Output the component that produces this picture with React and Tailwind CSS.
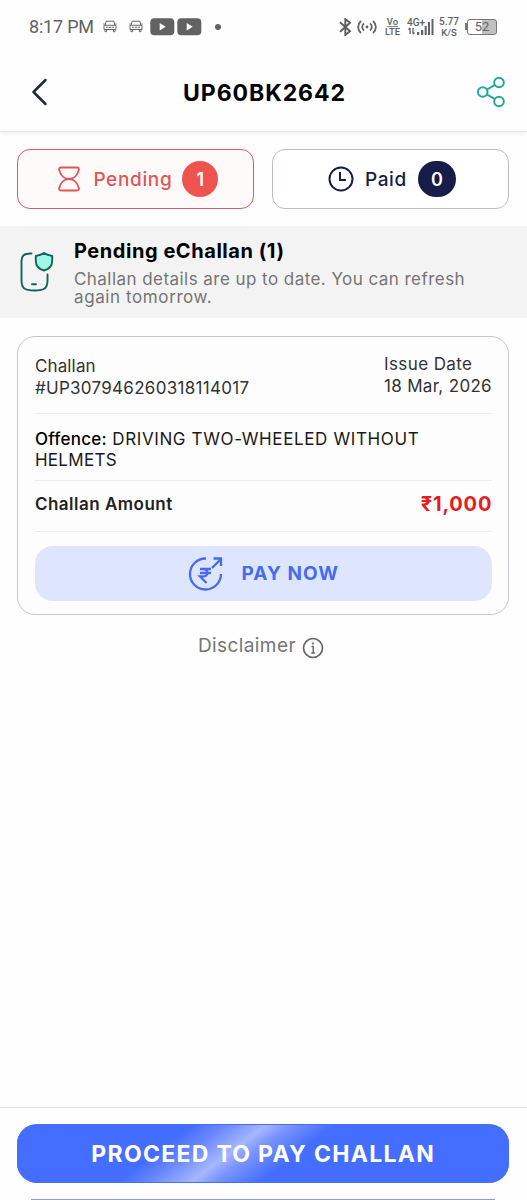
const tabClass = 'flex h-[60px] w-[237px] items-center rounded-[13px]'

function StatusCar() {
  return (
    <svg width="14" height="13" viewBox="0 0 14 13" fill="none" stroke="#666" strokeWidth="1">
      <path d="M2.2 5 3.2 1.2h7.6L11.8 5M1 5.3h12v4.2H1zM.3 4h1.5M12.2 4h1.5M3 7.3h1.8M9.2 7.3H11M5.6 7.4h2.8M2 9.5v2.2h1.6V9.5M10.4 9.5v2.2H12V9.5" />
    </svg>
  )
}

function StatusPlay() {
  return (
    <svg width="25" height="18" viewBox="0 0 25 18">
      <rect x=".3" y=".3" width="24" height="17" rx="4" fill="#626262" />
      <path d="m9.700 5 6 3.800-6 3.800Z" fill="#fff" />
    </svg>
  )
}

function StatusBar() {
  return (
    <div className="flex h-[53px] items-center pl-[29px] pr-[30px] text-[#626262]">
      <span className="w-[65px] whitespace-nowrap font-['Roboto'] text-[18px] tracking-[-0.2px]">8:17 PM</span>
      <div className="ml-[9px] flex items-center">
        <StatusCar />
        <span className="ml-[12px]"><StatusCar /></span>
        <span className="ml-[7px]"><StatusPlay /></span>
        <span className="ml-[1.5px]"><StatusPlay /></span>
        <span className="ml-[13px] h-[6px] w-[6px] rounded-full bg-[#626262]" />
      </div>
      <div className="ml-auto flex items-center font-['Roboto']">
        <svg width="13" height="18" viewBox="0 0 13 18" fill="none" stroke="#5c5c5c" strokeWidth="1.9">
          <path d="m1 4.200 10 9L6.300 17V1L11 4.800l-10 9" />
        </svg>
        <svg className="ml-[5px]" width="20" height="14" viewBox="0 0 20 14" fill="none" stroke="#626262" strokeWidth="1.8">
          <path d="M4 1C.2 4.400.2 9.600 4 13M7 3.400c-2.400 2-2.400 5.200 0 7.200M16 1c3.800 3.400 3.800 8.600 0 12M13 3.400c2.400 2 2.400 5.200 0 7.200" />
          <circle cx="10" cy="7" r="1.4" fill="#626262" stroke="none" />
        </svg>
        <div className="ml-[7px] flex w-[17px] flex-col items-center text-[9.5px] font-medium leading-[9px]">
          <span className="border-b border-[#888]">Vo</span>
          <span>LTE</span>
        </div>
        <svg className="ml-[6px]" width="28" height="18" viewBox="0 0 28 18" fill="#626262">
          <text x="0" y="8" fontSize="10" fontWeight="500" fontFamily="Roboto">4G+</text>
          <path d="M3 10v6M1.500 11.500 3 10M6 10v6M7.500 14.500 6 16" stroke="#626262" strokeWidth="1.3" fill="none" />
          <path d="M10 14h2.200v3H10zM14 12h2.200v5H14zM17.700 8h2v9h-2zM21 4h2v13h-2zM24.500 1h2v16h-2z" />
        </svg>
        <div className="ml-[4px] flex w-[20px] flex-col items-center whitespace-nowrap text-[10px] font-medium leading-[11px]">
          <span>5.77</span>
          <span className="text-[9.5px]">K/S</span>
        </div>
        <div className="ml-[6px] flex items-center">
          <span className="h-[7px] w-[2px] bg-[#777]" />
          <span className="flex h-[16px] w-[30px] items-center justify-center rounded-[3px] border-[1.5px] border-[#777] bg-linear-to-r from-white from-50% to-[#c0c0c0] to-50% text-[13px] leading-none">52</span>
        </div>
      </div>
    </div>
  )
}

function Header() {
  return (
    <header className="flex h-[79px] items-center justify-between border-b border-[#e7e7e7] pl-[30px] pr-[21px] shadow-[0_2px_4px_rgba(0,0,0,0.06)]">
      <svg width="18" height="28" viewBox="0 0 18 28" fill="none" stroke="#1e293b" strokeWidth="2.5" strokeLinecap="round" strokeLinejoin="round">
        <path d="M15.500 2 3.500 14l12 12" />
      </svg>
      <h1 className="ml-[5px] whitespace-nowrap pt-[2px] text-[23px] font-bold tracking-[0.95px] text-black">UP60BK2642</h1>
      <svg width="30" height="32" viewBox="0 0 30 32" fill="none" stroke="#20a895" strokeWidth="2">
        <circle cx="6.700" cy="16" r="4.800" />
        <circle cx="23" cy="6.500" r="4.800" />
        <circle cx="23" cy="25.500" r="4.800" />
        <path d="m11 13.500 8-4.600M11 18.500l8 4.600" />
      </svg>
    </header>
  )
}

function Tabs() {
  return (
    <div className="flex justify-between pl-[17.4px] pr-[18px] pt-[17px]">
      <div className={`${tabClass} border-[1.5px] border-[#d85c61] bg-[#fffafa] pl-[39px]`}>
        <svg width="24" height="26" viewBox="0 0 24 26" fill="none" stroke="#e05654" strokeWidth="1.9" strokeLinejoin="round">
          <path d="M4 1.500h16c1.600 0 2.200 1 1.800 2.400-1.200 5.200-5 9.100-9.800 9.100S3.400 9.100 2.200 3.900C1.800 2.500 2.400 1.500 4 1.500ZM4 24.500h16c1.600 0 2.200-1 1.800-2.400-1.200-5.200-5-9.100-9.800-9.100s-8.600 3.900-9.800 9.100c-.4 1.400.2 2.400 1.800 2.400Z" />
        </svg>
        <span className="ml-[12px] w-[78px] whitespace-nowrap pt-[2px] text-[19px] font-medium tracking-[0.65px] text-[#e05654]">Pending</span>
        <span className="ml-[11px] flex h-[36px] w-[36px] items-center justify-center rounded-full bg-[#ef5350] text-[18px] font-semibold text-white">1</span>
      </div>
      <div className={`${tabClass} border-[1.5px] border-[#b9bccb] bg-white pl-[55px]`}>
        <svg width="26" height="26" viewBox="0 0 26 26" fill="none" stroke="#171d48" strokeWidth="2">
          <circle cx="13" cy="13" r="11.500" />
          <path d="M12 6v8h6" />
        </svg>
        <span className="ml-[11px] w-[42px] whitespace-nowrap pt-[2px] text-[19px] font-medium tracking-[0.6px] text-[#171d48]">Paid</span>
        <span className="ml-[11px] flex h-[36px] w-[38px] items-center justify-center rounded-full bg-[#171d48] text-[18px] font-semibold text-white">0</span>
      </div>
    </div>
  )
}

function Notice() {
  return (
    <section className="mt-[17px] flex h-[92px] bg-[#f3f3f3] pl-[20px]">
      <svg className="mt-[25px]" width="34" height="42" viewBox="0 0 34 42" fill="none" stroke="#0f6659" strokeWidth="1.9" strokeLinecap="round" strokeLinejoin="round">
        <path d="M11.500 2.500C4 2.300 1.500 4.500 1.500 11v18c0 8 2.500 10.500 13 10.500S27.500 37 27.500 29v-5.500M12 33.200h4" />
        <path d="M24 2c3 2 5.500 2.400 8.200 2.900V10c0 5-3.600 8.200-8.200 9.500-4.600-1.300-8.200-4.500-8.200-9.500V4.900C18.500 4.400 21 4 24 2Z" fill="#9ff8e8" />
      </svg>
      <div className="ml-[20px] pt-[13px]">
        <h2 className="whitespace-nowrap text-[20px] font-bold leading-[25px] tracking-[0.55px] text-black">Pending eChallan (1)</h2>
        <p className="mt-[6px] whitespace-nowrap text-[17px] leading-[18px] tracking-[0.45px] text-[#757575]">
          Challan details are up to date. You can refresh<br />
          <span className="tracking-[0.6px]">again tomorrow.</span>
        </p>
      </div>
    </section>
  )
}

function ChallanCard() {
  return (
    <section className="ml-[17.4px] mr-[18px] mt-[18px] h-[279px] rounded-[18px] border border-[#c5c8d0] bg-[#fdfdfd] px-[16.5px]">
      <div className="flex h-[77px] justify-between border-b border-[#ebebed] text-[17px] leading-[22px] text-[#333]">
        <div className="pt-[18px]">
          <p className="tracking-[0.15px]">Challan</p>
          <p className="whitespace-nowrap tracking-[0.29px]">#UP307946260318114017</p>
        </div>
        <div className="w-[107.5px] whitespace-nowrap pt-[16px]">
          <p className="tracking-[0.4px]">Issue Date</p>
          <p className="tracking-[0.32px]">18 Mar, 2026</p>
        </div>
      </div>
      <p className="h-[67px] whitespace-nowrap border-b border-[#ebebed] pt-[15px] text-[17px] leading-[21px] tracking-[0.62px] text-[#1a1a1a]">
        <span className="font-medium tracking-[0.25px] text-black">Offence:</span> DRIVING TWO-WHEELED WITHOUT<br />
        <span className="tracking-[0.3px]">HELMETS</span>
      </p>
      <div className="flex h-[51px] items-start justify-between border-b border-[#ebebed] pt-[11px] leading-[24px]">
        <span className="text-[17px] font-semibold tracking-[0.5px] text-[#222]">Challan Amount</span>
        <span className="-mr-[0.7px] text-[20px] font-bold tracking-[0.8px] text-[#e51c20]">₹1,000</span>
      </div>
      <button className="mt-[14px] flex h-[55px] w-full items-center rounded-[18px] bg-[#dde5ff] pl-[153px] text-[#486bee]">
        <svg width="36" height="36" viewBox="0 0 36 36" fill="none" stroke="#486bee" strokeWidth="2.3">
          <path d="M18 2.500A15.500 15.500 0 1 0 33 18M24 12l9-9M25.500 2.500H33V10" />
          <path d="M12 13h11M12 17h11M12 13h3c6 0 6 7.500 0 7.500h-3l6.500 6.500" />
        </svg>
        <span className="ml-[17.5px] whitespace-nowrap pt-px text-[19px] font-bold tracking-[1.05px]">PAY NOW</span>
      </button>
    </section>
  )
}

function Footer() {
  return (
    <footer className="mt-auto h-[93px] overflow-hidden border-t border-[#e3e3e7] pl-[17.4px] pr-[18px] pt-[16px]">
      <button className="h-[59px] w-full whitespace-nowrap rounded-[20px] border-y border-[#4c70ec] bg-[#446eff] bg-[linear-gradient(143deg,#446eff_31%,#6c89ff_37%,#a5b7ff_44%,#7a95ff_48%,#446eff_56%)] pt-[2px] text-[23px] font-bold tracking-[1.3px] text-white">
        PROCEED TO PAY CHALLAN
      </button>
      <div className="mx-[14px] mt-[16px] h-[2px] bg-[#8a9fd8]" />
    </footer>
  )
}

export default function App() {
  return (
    <main className="flex h-[1200px] w-[527px] flex-col overflow-hidden bg-[#fefefe] font-['Inter',sans-serif]">
      <StatusBar />
      <Header />
      <Tabs />
      <Notice />
      <ChallanCard />
      <div className="mt-[17px] flex h-[30px] pl-[198px] text-[#757575]">
        <span className="w-[98px] whitespace-nowrap text-[19px] leading-[27px] tracking-[0.4px]">Disclaimer</span>
        <svg className="ml-[6px] mt-[5px]" width="22" height="22" viewBox="0 0 22 22" fill="none" stroke="#666" strokeWidth="1.7">
          <circle cx="11" cy="11" r="9.500" />
          <path d="M9.500 9.500h1.700V16M9.300 16h3.800" strokeWidth="1.4" />
          <circle cx="11" cy="6.500" r="1.100" fill="#666" stroke="none" />
        </svg>
      </div>
      <Footer />
    </main>
  )
}
